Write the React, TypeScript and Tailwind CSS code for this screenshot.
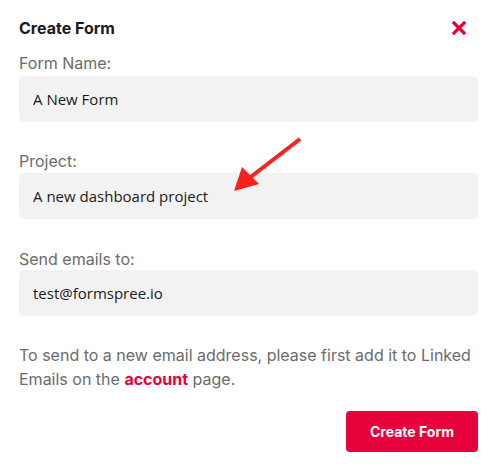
export default function App() {
  const label = "text-[16px] leading-[20px] text-[#6b6b6b]";
  const input =
    "w-full h-[46px] rounded-[5px] bg-[#f2f2f2] px-[14px] text-[15px] text-[#1a1a1a] outline-none font-['Open_Sans',sans-serif]";

  return (
    <div className="relative w-[499px] h-[473px] bg-white font-['Inter',sans-serif]">
      <div className="pl-[19px] pr-[21px] pt-[15px]">
        <div className="flex items-center justify-between h-[22px]">
          <h1 className="mt-[3px] text-[16px] font-bold text-[#1a1a1a]">Create Form</h1>
          <button type="button" className="mr-[12px] mt-[3px] text-[#e8003a]">
            <svg width="14" height="14" viewBox="0 0 14 14">
              <path d="M2 2 L12 12 M12 2 L2 12" stroke="currentColor" strokeWidth="3.2" strokeLinecap="square" />
            </svg>
          </button>
        </div>

        <div className="mt-[16px] flex flex-col gap-[3px]">
          <label className={label}>Form Name:</label>
          <input className={input} defaultValue="A New Form" />
        </div>

        <div className="mt-[29px] flex flex-col gap-[2px]">
          <label className={label}>Project:</label>
          <input className={input} defaultValue="A new dashboard project" />
        </div>

        <div className="mt-[30px] flex flex-col gap-[1px]">
          <label className={label}>Send emails to:</label>
          <input className={input} defaultValue="test@formspree.io" />
        </div>

        <p className="mt-[27px] text-[16px] leading-[24px] text-[#6b6b6b]">
          To send to a new email address, please first add it to Linked Emails on the{" "}
          <a className="font-bold text-[#e8003a]">account</a> page.
        </p>

        <div className="mt-[20px] flex justify-end">
          <button
            type="button"
            className="w-[132px] h-[41px] rounded-[4px] bg-[#e8003a] text-[14px] font-bold text-white"
          >
            Create Form
          </button>
        </div>
      </div>

      <svg className="absolute left-0 top-0 pointer-events-none" width="499" height="473">
        <line x1="300" y1="139" x2="248" y2="179" stroke="#ff1f1f" strokeWidth="4" />
        <polygon points="234,191 242,167 259,184" fill="#ff1f1f" />
      </svg>
    </div>
  );
}
